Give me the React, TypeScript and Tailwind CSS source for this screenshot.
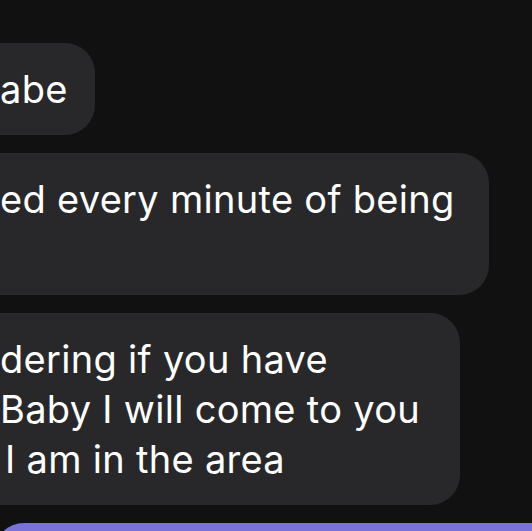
export default function App() {
  return (
    <div
      className="h-[531px] w-[532px] overflow-hidden bg-[#111111] text-white"
      style={{ fontFamily: 'Inter, "Noto Sans", sans-serif' }}
    >
      <div className="flex flex-col gap-[18px] pt-[43px]">
        <Bubble width="w-[125px]">
          <div>abe</div>
        </Bubble>
        <Bubble width="w-[519px]">
          <div>ed every minute of being</div>
          <div>&nbsp;</div>
        </Bubble>
        <Bubble width="w-[490px]">
          <div>dering if you have</div>
          <div>Baby I will come to you</div>
          <div className="pl-[5px]">I am in the area</div>
        </Bubble>
        {/* outgoing bubble, only its top edge shows */}
        <div className="ml-[-6px] h-[60px] w-[560px] rounded-tl-[30px] bg-[#7a72d9]" />
      </div>
    </div>
  );
}

function Bubble({ width, children }: { width: string; children: React.ReactNode }) {
  return (
    <div
      className={`ml-[-30px] ${width} rounded-[30px] bg-[#28282a] py-[21px] pl-[30px] pr-[38px] text-[38px] leading-[50px] tracking-[0.3px] whitespace-nowrap`}
    >
      {children}
    </div>
  );
}
